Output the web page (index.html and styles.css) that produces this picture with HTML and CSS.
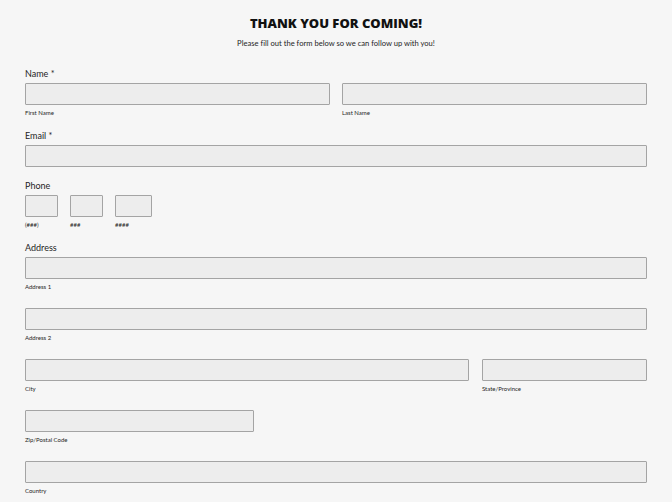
FILE: index.html
```html
<!DOCTYPE html>
<html>
<head>
<meta charset="utf-8">
<link rel="stylesheet" href="styles.css">
</head>
<body>
<div class="page">
  <h1 class="title">THANK YOU FOR COMING!</h1>
  <p class="intro">Please fill out the form below so we can follow up with you!</p>

  <div class="group">
    <div class="label">Name *</div>
    <div class="row row-name">
      <div class="cell"><div class="input"></div><div class="sub">First Name</div></div>
      <div class="cell"><div class="input"></div><div class="sub">Last Name</div></div>
    </div>
  </div>

  <div class="group">
    <div class="label">Email *</div>
    <div class="input"></div>
  </div>

  <div class="group">
    <div class="label">Phone</div>
    <div class="row row-phone">
      <div class="cell"><div class="input"></div><div class="sub">(###)</div></div>
      <div class="cell"><div class="input"></div><div class="sub">###</div></div>
      <div class="cell"><div class="input"></div><div class="sub">####</div></div>
    </div>
  </div>

  <div class="group">
    <div class="label">Address</div>
    <div class="addr">
      <div class="cell"><div class="input"></div><div class="sub">Address 1</div></div>
      <div class="cell"><div class="input"></div><div class="sub">Address 2</div></div>
      <div class="row row-city">
        <div class="cell"><div class="input"></div><div class="sub">City</div></div>
        <div class="cell"><div class="input"></div><div class="sub">State/Province</div></div>
      </div>
      <div class="row row-zip">
        <div class="cell"><div class="input"></div><div class="sub">Zip/Postal Code</div></div>
      </div>
      <div class="cell"><div class="input"></div><div class="sub">Country</div></div>
    </div>
  </div>
</div>
</body>
</html>
```

FILE: styles.css
```css
html, body {
  margin: 0;
  padding: 0;
  background: #f6f6f6;
}
body {
  font-family: Lato, "Liberation Sans", sans-serif;
  color: #1e1e1e;
}
.page {
  padding: 13px 25px 0 25px;
}
.title {
  margin: 0;
  text-align: center;
  font-family: "Open Sans", sans-serif;
  font-weight: 800;
  font-size: 13px;
  line-height: 20px;
  letter-spacing: 0;
  color: #111;
}
.intro {
  margin: 4px 0 0 0;
  text-align: center;
  font-size: 7.6px;
  line-height: 12px;
  font-variant-ligatures: none;
}
.group {
  margin-bottom: 13px;
}
.intro + .group {
  margin-top: 19px;
}
.label {
  font-size: 9px;
  line-height: 12px;
  margin-bottom: 3px;
}
.input {
  box-sizing: border-box;
  height: 22px;
  background: #ededed;
  border: 1px solid #a4a4a4;
  border-radius: 1px;
}
.sub {
  font-size: 6px;
  line-height: 8px;
  margin-top: 4px;
}
.row {
  display: grid;
}
.row-name {
  grid-template-columns: 1fr 1fr;
  column-gap: 12px;
}
.row-phone {
  grid-template-columns: 33px 33px 37px;
  column-gap: 12px;
  justify-content: start;
}
.row-city {
  grid-template-columns: 444px 1fr;
  column-gap: 13px;
}
.row-zip {
  grid-template-columns: 229px;
}
.addr {
  display: flex;
  flex-direction: column;
  gap: 17px;
}
```
